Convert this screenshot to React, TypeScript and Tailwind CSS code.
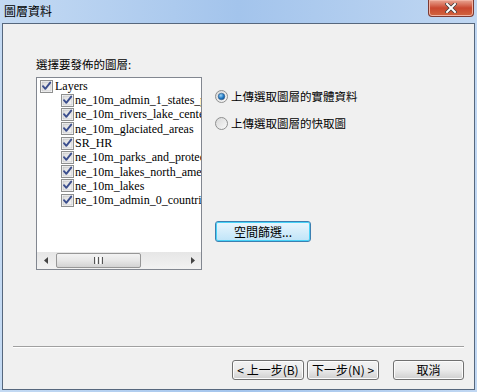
import React from 'react'

// 圖層資料 — layer publish dialog (Win7 style)

const LAYERS = [
  'ne_10m_admin_1_states_provinces',
  'ne_10m_rivers_lake_centerlines',
  'ne_10m_glaciated_areas',
  'SR_HR',
  'ne_10m_parks_and_protected_lands',
  'ne_10m_lakes_north_america',
  'ne_10m_lakes',
  'ne_10m_admin_0_countries',
]

function CheckBox() {
  return (
    <svg width="13" height="13" viewBox="0 0 13 13" className="shrink-0">
      <defs>
        <linearGradient id="cbg" x1="0" y1="0" x2="1" y2="1">
          <stop offset="0" stopColor="#dcdcdc" />
          <stop offset="1" stopColor="#f6f6f6" />
        </linearGradient>
      </defs>
      <rect x="0.5" y="0.5" width="12" height="12" fill="#fff" stroke="#8e8f8f" />
      <rect x="2" y="2" width="9" height="9" fill="url(#cbg)" stroke="#b4b6b9" strokeWidth="0.6" />
      <path d="M3 6.2 L5.3 8.8 L10.2 2.6" fill="none" stroke="#3c4f8e" strokeWidth="1.9" strokeLinecap="round" strokeLinejoin="round" />
    </svg>
  )
}

function Radio({ checked }: { checked?: boolean }) {
  return (
    <svg width="13" height="13" viewBox="0 0 13 13" className="shrink-0">
      <defs>
        <linearGradient id="rbg" x1="0" y1="0" x2="1" y2="1">
          <stop offset="0" stopColor="#d6d6d6" />
          <stop offset="1" stopColor="#fbfbfb" />
        </linearGradient>
        <radialGradient id="rdot" cx="0.4" cy="0.35" r="0.7">
          <stop offset="0" stopColor="#9fd5f5" />
          <stop offset="0.6" stopColor="#1f78c4" />
          <stop offset="1" stopColor="#0d4f8f" />
        </radialGradient>
      </defs>
      <circle cx="6.5" cy="6.5" r="6" fill="url(#rbg)" stroke="#8e8f8f" />
      {checked && <circle cx="6.5" cy="6.5" r="3.3" fill="url(#rdot)" stroke="#3a5e85" strokeWidth="0.6" />}
    </svg>
  )
}

function WinButton({ children, focused, className = '' }: { children: React.ReactNode; focused?: boolean; className?: string }) {
  return (
    <div
      className={`flex items-center justify-center rounded-[3px] border text-[12px] text-black ${
        focused
          ? 'border-[#3c7fb1] bg-gradient-to-b from-[#eaf6fd] to-[#bfe4f8] shadow-[inset_0_0_0_1px_#48d2f7]'
          : 'border-[#707070] bg-gradient-to-b from-[#f2f2f2] via-[#ebebeb] to-[#cfcfcf] shadow-[inset_0_0_0_1px_#fcfcfc]'
      } ${className}`}
    >
      {children}
    </div>
  )
}

function ScrollBar() {
  return (
    <div className="flex h-[17px] items-center bg-gradient-to-b from-[#e6e6e6] to-[#f2f2f2]">
      <div className="flex w-[17px] justify-center">
        <svg width="4" height="7" viewBox="0 0 4 7"><path d="M4 0 L0 3.5 L4 7Z" fill="#444" /></svg>
      </div>
      <div className="ml-[2px] flex h-[15px] w-[85px] items-center justify-center rounded-[2px] border border-[#979797] bg-gradient-to-b from-[#f3f3f3] via-[#e7e7e7] to-[#d3d3d3]">
        <div className="flex gap-[1px]">
          <div className="h-[7px] w-[1px] bg-[#555]" />
          <div className="h-[7px] w-[1px] bg-[#fff]" />
          <div className="h-[7px] w-[1px] bg-[#555]" />
          <div className="h-[7px] w-[1px] bg-[#fff]" />
          <div className="h-[7px] w-[1px] bg-[#555]" />
        </div>
      </div>
      <div className="flex-1" />
      <div className="flex w-[17px] justify-center">
        <svg width="4" height="7" viewBox="0 0 4 7"><path d="M0 0 L4 3.5 L0 7Z" fill="#444" /></svg>
      </div>
    </div>
  )
}

export default function App() {
  const cjk = "font-['Noto_Sans_CJK_TC','Noto_Sans',sans-serif]"
  return (
    <div className={`flex h-[392px] w-[477px] flex-col bg-gradient-to-r from-[#c4daf3] via-[#a3c4ec] to-[#c0d7f2] ${cjk}`}>
      {/* title bar */}
      <div className="flex h-[23px] shrink-0 items-start">
        <span className="ml-[4px] mt-[4px] text-[12px] leading-[14px] text-black">圖層資料</span>
        <div className="flex-1" />
        <div className="mr-[3px] flex h-[17px] w-[46px] items-center justify-center rounded-b-[4px] border border-t-0 border-[#7c3a33] bg-gradient-to-b from-[#e8a493] via-[#c9462f] to-[#d0653f] shadow-[inset_0_0_0_1px_#f2b3a3]">
          <svg width="12" height="10" viewBox="0 0 12 10">
            <path d="M2 1 L10 9 M10 1 L2 9" stroke="#3b3b3b" strokeWidth="3.4" strokeLinecap="square" />
            <path d="M2 1 L10 9 M10 1 L2 9" stroke="#fff" strokeWidth="2" strokeLinecap="square" />
          </svg>
        </div>
      </div>

      {/* client area */}
      <div className="mx-[2px] mb-[2px] flex flex-1 flex-col border border-[#56677d] bg-[#f0f0f0]">
        <div className="flex flex-col pl-[33px] pt-[33px]">
          <span className="text-[11.5px] leading-[15px] text-black">選擇要發佈的圖層:</span>
          <div className="mt-[5px] flex">
            {/* tree */}
            <div className="flex h-[193px] w-[166px] flex-col overflow-hidden border border-[#828790] bg-white">
              <div className="flex-1 overflow-hidden pt-[1px] font-['Liberation_Serif',serif] text-[12px] text-black">
                <div className="flex h-[14px] items-center pl-[3px] whitespace-nowrap">
                  <CheckBox />
                  <span className="ml-[2px] leading-[14px]">Layers</span>
                </div>
                {LAYERS.map((name) => (
                  <div key={name} className="flex h-[14.3px] items-center pl-[24px] whitespace-nowrap">
                    <CheckBox />
                    <span className="ml-[1px] leading-[14px]">{name}</span>
                  </div>
                ))}
              </div>
              <ScrollBar />
            </div>

            {/* options */}
            <div className="ml-[13px] flex flex-col pt-[13px]">
              <div className="flex h-[13px] items-center">
                <Radio checked />
                <span className="ml-[3px] text-[11.5px] leading-[13px] text-black">上傳選取圖層的實體資料</span>
              </div>
              <div className="mt-[14px] flex h-[13px] items-center">
                <Radio />
                <span className="ml-[3px] text-[11.5px] leading-[13px] text-black">上傳選取圖層的快取圖</span>
              </div>
              <WinButton focused className="mt-[91px] h-[21px] w-[96px]">空間篩選...</WinButton>
            </div>
          </div>
        </div>

        <div className="flex-1" />
        <div className="mx-[10px] h-[2px] border-t border-[#a0a0a0] border-b-white border-b" />
        <div className="mb-[9px] mr-[10px] mt-[12px] flex justify-end">
          <WinButton className="h-[20px] w-[72px]">&lt; 上一步(B)</WinButton>
          <WinButton className="ml-[3px] h-[20px] w-[72px]">下一步(N) &gt;</WinButton>
          <WinButton className="ml-[14px] h-[20px] w-[71px]">取消</WinButton>
        </div>
      </div>
    </div>
  )
}
